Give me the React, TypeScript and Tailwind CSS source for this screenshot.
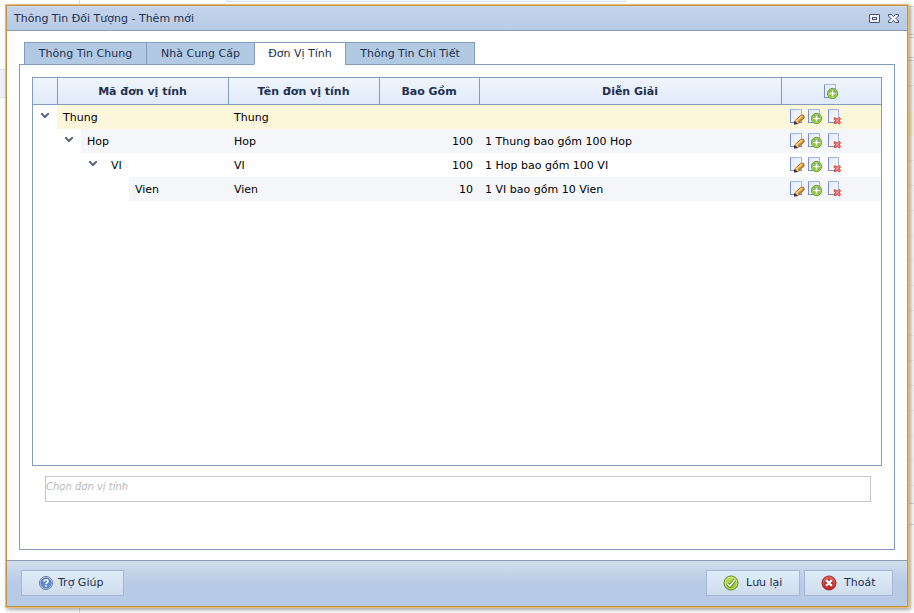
import React from "react";

type Unit = {
  code: string;
  name: string;
  amount: string;
  note: string;
};

const units: Unit[] = [
  { code: "Thung", name: "Thung", amount: "", note: "" },
  { code: "Hop", name: "Hop", amount: "100", note: "1 Thung bao gồm 100 Hop" },
  { code: "VI", name: "VI", amount: "100", note: "1 Hop bao gồm 100 VI" },
  { code: "Vien", name: "Vien", amount: "10", note: "1 VI bao gồm 10 Vien" },
];

const rowColors = ["bg-[#fcf6da]", "bg-[#f4f6fa]", "bg-white", "bg-[#f4f6fa]"];

const tabs = [
  { label: "Thông Tin Chung", width: "w-[123px]" },
  { label: "Nhà Cung Cấp", width: "w-[109px]" },
  { label: "Đơn Vị Tính", width: "w-[92px]" },
  { label: "Thông Tin Chi Tiết", width: "w-[130px]" },
];

function Gradients() {
  return (
    <svg width="0" height="0" className="absolute" aria-hidden="true">
      <defs>
        <linearGradient id="page" x1="0" y1="0" x2="1" y2="1">
          <stop offset="0" stopColor="#dfe8f8" />
          <stop offset="1" stopColor="#ffffff" />
        </linearGradient>
        <linearGradient id="green" x1="0" y1="0" x2="0" y2="1">
          <stop offset="0" stopColor="#7da650" />
          <stop offset="1" stopColor="#84cc20" />
        </linearGradient>
        <linearGradient id="lime" x1="0" y1="0" x2="0" y2="1">
          <stop offset="0" stopColor="#c3e26a" />
          <stop offset="1" stopColor="#8fc31a" />
        </linearGradient>
        <linearGradient id="red" x1="0" y1="0" x2="0" y2="1">
          <stop offset="0" stopColor="#e0685f" />
          <stop offset="1" stopColor="#c81e1a" />
        </linearGradient>
        <linearGradient id="blue" x1="0" y1="0" x2="0" y2="1">
          <stop offset="0" stopColor="#5f7dc4" />
          <stop offset="1" stopColor="#5a92e0" />
        </linearGradient>
      </defs>
    </svg>
  );
}

function Page({ x, width = 12 }: { x: number; width?: number }) {
  return (
    <>
      <rect x={x + 0.5} y="0.5" width={width - 1} height="13" fill="url(#page)" stroke="#a3b6e6" />
      <path d={`M${x + 0.5} 1v13M${x} 13.5h${width}`} stroke="#7b8cc8" fill="none" />
    </>
  );
}

function AddIcon() {
  return (
    <svg width="16" height="16" viewBox="0 0 16 16" aria-hidden="true">
      <Page x={1} />
      <circle cx="9.5" cy="9.5" r="5.200" fill="url(#green)" stroke="#5c9434" strokeWidth="0.8" />
      <circle cx="9.5" cy="9.5" r="4.100" fill="none" stroke="#b4dc7c" strokeWidth="0.7" />
      <path d="M9.5 6.500v6M6.5 9.500h6" stroke="#fff" strokeWidth="1.500" />
    </svg>
  );
}

function EditIcon() {
  return (
    <svg width="16" height="16" viewBox="0 0 16 16" aria-hidden="true">
      <Page x={1} />
      <path d="M5.500 15l.5-3.400 6-5.200q1.500-.9 2.600.3t.2 2.400l-6.100 5.600z" fill="#dc9228" stroke="#8c5010" strokeWidth="0.9" />
      <path d="M7.500 11.800l5.800-4.900" stroke="#f9d78a" strokeWidth="1.400" />
      <path d="M4.800 15.600l.8-3.600 2.900 2.700z" fill="#2d2d4d" />
      <path d="M6.200 11.500l2.600 2.600.7-.7-2.400-2.500z" fill="#f7e6c4" />
    </svg>
  );
}

function DeleteIcon() {
  return (
    <svg width="16" height="16" viewBox="0 0 16 16" aria-hidden="true">
      <Page x={3} width={11} />
      <path
        d="M8.900 9.500l1.200-1 2.200 1.500 2.200-1.500 1.100 1-1.300 2.200 1.300 2.200-1.100 1-2.200-1.500-2.200 1.500-1.200-1 1.400-2.200z"
        fill="#e4645e"
        stroke="#d04a45"
      />
      <path d="M10.700 10l3.200 3.200M13.900 10l-3.200 3.200" stroke="#f8b8b0" strokeWidth="0.900" />
    </svg>
  );
}

function ChevronIcon() {
  return (
    <svg width="8" height="6" viewBox="0 0 8 6" shapeRendering="crispEdges" aria-hidden="true">
      <path d="M0 0h2v1h1v1h2v-1h1v-1h2v2h-1v1h-1v1h-1v1h-2v-1h-1v-1h-1v-1h-1z" fill="#66718c" />
    </svg>
  );
}

function HelpIcon() {
  return (
    <svg width="16" height="16" viewBox="0 0 16 16" aria-hidden="true">
      <circle cx="8" cy="8" r="6.500" fill="#dbe6f8" stroke="#6475a8" />
      <circle cx="8" cy="8" r="5.200" fill="url(#blue)" stroke="#4666b4" strokeWidth="0.6" />
      <path d="M6 6.700q0-2 2-2t2 1.700q0 1-1.100 1.500-.9.400-.9 1.400" fill="none" stroke="#fff" strokeWidth="1.500" />
      <rect x="7.200" y="10.300" width="1.600" height="1.500" fill="#fff" />
    </svg>
  );
}

function SaveIcon() {
  return (
    <svg width="16" height="16" viewBox="0 0 16 16" aria-hidden="true">
      <circle cx="8" cy="8" r="7" fill="url(#lime)" stroke="#5f7f1c" />
      <circle cx="8" cy="8" r="6" fill="none" stroke="#dcefa4" strokeWidth="0.6" />
      <path d="M4.300 8.600l2.600 2.500 4.800-5.800" fill="none" stroke="#54701a" strokeWidth="3.200" />
      <path d="M4.300 8.600l2.600 2.500 4.800-5.800" fill="none" stroke="#fff" strokeWidth="1.700" />
    </svg>
  );
}

function ExitIcon() {
  return (
    <svg width="16" height="16" viewBox="0 0 16 16" aria-hidden="true">
      <circle cx="8" cy="8" r="7" fill="url(#red)" stroke="#a32a26" />
      <path d="M5.500 5.500l5 5M10.500 5.500l-5 5" stroke="#8d1512" strokeWidth="4" />
      <path d="M5.200 5.200l5.600 5.600M10.800 5.200l-5.600 5.600" stroke="#fff" strokeWidth="2.400" />
    </svg>
  );
}

function IconButton({ label, children }: { label: string; children: React.ReactNode }) {
  return (
    <button type="button" aria-label={label} className="block size-4">
      {children}
    </button>
  );
}

function FooterButton({ className, icon, children }: { className: string; icon: React.ReactNode; children: string }) {
  return (
    <button
      type="button"
      className={`flex h-[26px] items-center border border-[#a5b7d3] bg-linear-to-b from-[#dfecf9] to-[#cfdced] pl-4 ${className}`}
    >
      {icon}
      {children}
    </button>
  );
}

/* Parts of the page under the dialog that show round its edges. */
function Backdrop() {
  return (
    <div className="absolute inset-0 overflow-hidden" aria-hidden="true">
      <div className="absolute inset-y-0 left-[79px] w-px bg-[#dcdfea]" />
      <div className="absolute -top-2 right-[288px] left-[226px] h-[10px] border border-[#dde2ee] bg-[#f6f8fb]" />
      <div className="absolute top-[69px] left-0 h-[29px] w-4 border-y border-[#dde2ea] bg-[#eef2f8]" />
      <div className="absolute top-[6px] right-0 h-[29px] w-4 border-y border-[#d3d9e6] bg-[#f7f9fd]" />
      <div className="absolute top-[37px] right-0 h-[21px] w-4 border-y border-[#d3d9e6]" />
      <div className="absolute top-[60px] right-0 h-[51px] w-4 border-t border-[#d3d9e6] bg-[#f8f9fc]" />
      <div className="absolute top-[85px] right-0 h-px w-4 bg-[#e3e7f0]" />
      <div className="absolute top-[111px] right-0 h-[25px] w-4 bg-[#fdf8e4]" />
      <div className="absolute top-[136px] right-0 h-[368px] w-4 border-b border-[#d3d9e6] bg-[repeating-linear-gradient(#fbfbfd_0px,#fbfbfd_24px,#e6e9f1_25px)]" />
      <div className="absolute top-[524px] right-0 h-px w-4 bg-[#d3d9e6]" />
    </div>
  );
}

export default function App() {
  return (
    <div className="relative flex min-h-screen flex-col bg-white px-[5px] pt-1 pb-[5px] font-['DejaVu_Sans',Verdana,sans-serif] text-[11px] leading-4 text-[#22304f]">
      <Backdrop />
      <Gradients />
      <section
        aria-labelledby="dialog-title"
        className="relative flex flex-1 flex-col border border-[#e9bd6b] shadow-[2px_2px_4px_rgba(0,0,0,0.35)]"
      >
        <div className="flex flex-1 flex-col border border-[#bd9345] bg-white">
          <header className="flex h-[25px] items-center border-t border-b border-t-[#d0dcf0] border-b-[#8c9cb4] bg-linear-to-b from-[#c4d3ec] to-[#b8cbe4] pr-2 pl-[7px]">
            <h1 id="dialog-title" className="flex-1">
              Thông Tin Đối Tượng - Thêm mới
            </h1>
            <div className="flex gap-2">
              <button type="button" aria-label="Phóng to">
                <svg width="11" height="11" viewBox="0 0 11 11" aria-hidden="true">
                  <rect x="0.500" y="1.500" width="10" height="8" rx="0.500" fill="#edf2fb" stroke="#45506e" />
                  <rect x="3.500" y="4.500" width="4" height="2" fill="#edf2fb" stroke="#45506e" />
                </svg>
              </button>
              <button type="button" aria-label="Đóng">
                <svg width="11" height="11" viewBox="0 0 11 11" aria-hidden="true">
                  <path
                    d="M0.500 1.500h3l2 2 2-2h3v1.500l-2.500 2.500 2.500 2.500v1.500h-3l-2-2-2 2h-3v-1.500l2.500-2.500-2.500-2.500z"
                    fill="#edf2fb"
                    stroke="#45506e"
                  />
                </svg>
              </button>
            </div>
          </header>

          <main className="flex flex-1 flex-col px-3 pt-[11px] pb-[10px]">
            <div role="tablist" className="relative z-10 -mb-px flex pl-[5px]">
              {tabs.map((tab) => {
                const active = tab.label === "Đơn Vị Tính";
                return (
                  <button
                    key={tab.label}
                    type="button"
                    role="tab"
                    aria-selected={active}
                    className={`-mr-px h-[23px] border border-[#829cbf] pt-px whitespace-nowrap ${tab.width} ${
                      active ? "border-b-white bg-white" : "bg-[#b2c9e3]"
                    }`}
                  >
                    {tab.label}
                  </button>
                );
              })}
            </div>

            <div role="tabpanel" className="flex flex-1 flex-col border border-[#829cbf] px-3 pt-3 pb-[47px]">
              <div className="min-h-[200px] flex-1 border border-[#829cbf]">
                <table className="w-full table-fixed border-collapse text-black">
                  <colgroup>
                    <col className="w-6" />
                    <col className="w-6" />
                    <col className="w-6" />
                    <col className="w-6" />
                    <col className="w-[99px]" />
                    <col className="w-[151px]" />
                    <col className="w-[100px]" />
                    <col />
                    <col className="w-[100px]" />
                  </colgroup>
                  <thead>
                    <tr className="h-[27px] bg-linear-to-b from-[#f0f5fd] to-[#dfeaf8] text-[#22304f] shadow-[inset_0_-1px_0_#829cbf]">
                      <th aria-label="Mở rộng" />
                      <th colSpan={4} className="p-0 shadow-[inset_1px_0_0_#829cbf]">Mã đơn vị tính</th>
                      <th className="p-0 shadow-[inset_1px_0_0_#829cbf]">Tên đơn vị tính</th>
                      <th className="p-0 shadow-[inset_1px_0_0_#829cbf]">Bao Gồm</th>
                      <th className="p-0 shadow-[inset_1px_0_0_#829cbf]">Diễn Giải</th>
                      <th className="p-0 shadow-[inset_1px_0_0_#829cbf]">
                        <div className="flex justify-center">
                          <IconButton label="Thêm đơn vị tính">
                            <AddIcon />
                          </IconButton>
                        </div>
                      </th>
                    </tr>
                  </thead>
                  <tbody>
                    {units.map((unit, level) => {
                      const color = rowColors[level];
                      return (
                        <tr key={unit.code} className="h-6">
                          {level > 0 && <td colSpan={level} className="p-0" />}
                          <td className="p-0 align-top">
                            {level < 3 && (
                              <button type="button" aria-label={`Thu gọn ${unit.code}`} className="flex h-[22px] w-6 items-center justify-center">
                                <ChevronIcon />
                              </button>
                            )}
                          </td>
                          <td colSpan={4 - level} className={`px-[6px] pt-[2px] pb-0 ${color}`}>{unit.code}</td>
                          <td className={`px-[6px] pt-[2px] pb-0 ${color}`}>{unit.name}</td>
                          <td className={`px-[6px] pt-[2px] pb-0 text-right ${color}`}>{unit.amount}</td>
                          <td className={`px-[6px] pt-[2px] pb-0 ${color}`}>{unit.note}</td>
                          <td className={`px-2 py-0 ${color}`}>
                            <div className="flex gap-[2px]">
                              <IconButton label={`Sửa ${unit.code}`}>
                                <EditIcon />
                              </IconButton>
                              <IconButton label={`Thêm vào ${unit.code}`}>
                                <AddIcon />
                              </IconButton>
                              <IconButton label={`Xóa ${unit.code}`}>
                                <DeleteIcon />
                              </IconButton>
                            </div>
                          </td>
                        </tr>
                      );
                    })}
                  </tbody>
                </table>
              </div>
              <input
                type="text"
                aria-label="Chọn đơn vị tính"
                placeholder="Chọn đơn vị tính"
                className="mt-[10px] mr-[11px] ml-[13px] h-[26px] border border-[#c8c8c8] bg-white pb-[6px] text-[10px] text-black placeholder:text-[#b8b8b8] placeholder:italic"
              />
            </div>
          </main>

          <footer className="flex h-[46px] items-center gap-1 border-t border-[#8c9cb4] bg-linear-to-b from-[#d0deec] to-[#b8cbe6] to-50% px-[14px] pb-px">
            <FooterButton className="mr-auto w-[103px] gap-1" icon={<HelpIcon />}>
              Trợ Giúp
            </FooterButton>
            <FooterButton className="w-[94px] gap-[7px]" icon={<SaveIcon />}>
              Lưu lại
            </FooterButton>
            <FooterButton className="w-[89px] gap-[7px]" icon={<ExitIcon />}>
              Thoát
            </FooterButton>
          </footer>
        </div>
      </section>
    </div>
  );
}
